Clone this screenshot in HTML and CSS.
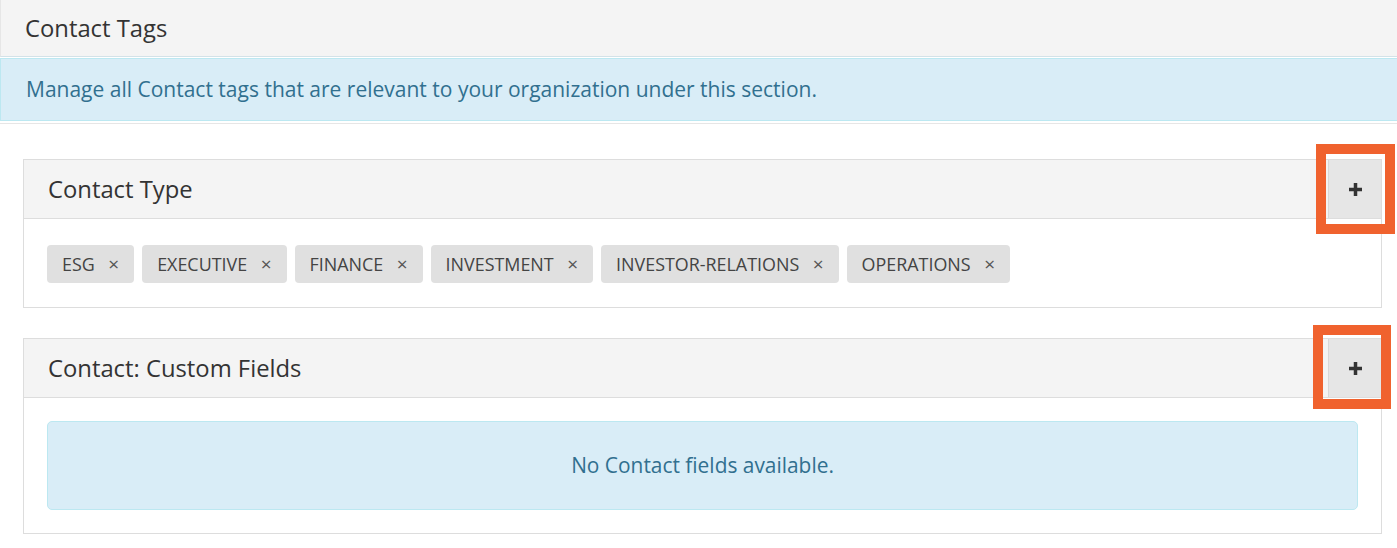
FILE: index.html
```html
<!DOCTYPE html>
<html lang="en">
<head>
    <meta charset="UTF-8">
    <meta name="viewport" content="width=device-width, initial-scale=1.0">
    <title>Contact Tags</title>
    <link rel="stylesheet" href="styles.css">
</head>
<body>
    <div class="page-head">Contact Tags</div>
    <div class="info-bar">Manage all Contact tags that are relevant to your organization under this section.</div>

    <div class="content">
        <!-- Contact Type -->
        <div class="panel">
            <div class="panel-heading">
                <span class="panel-title">Contact Type</span>
                <button class="add-btn" type="button">
                    <svg width="15" height="15" viewBox="0 0 15 15"><path d="M7.5 1v13M1 7.5h13" stroke="#333" stroke-width="3.5"/></svg>
                </button>
                <span class="highlight highlight-one"></span>
            </div>
            <div class="panel-body tag-list">
                <span class="tag">ESG <span class="tag-x">&times;</span></span>
                <span class="tag">EXECUTIVE <span class="tag-x">&times;</span></span>
                <span class="tag">FINANCE <span class="tag-x">&times;</span></span>
                <span class="tag">INVESTMENT <span class="tag-x">&times;</span></span>
                <span class="tag">INVESTOR-RELATIONS <span class="tag-x">&times;</span></span>
                <span class="tag">OPERATIONS <span class="tag-x">&times;</span></span>
            </div>
        </div>

        <!-- Custom fields -->
        <div class="panel">
            <div class="panel-heading">
                <span class="panel-title">Contact: Custom Fields</span>
                <button class="add-btn" type="button">
                    <svg width="15" height="15" viewBox="0 0 15 15"><path d="M7.5 1v13M1 7.5h13" stroke="#333" stroke-width="3.5"/></svg>
                </button>
                <span class="highlight highlight-two"></span>
            </div>
            <div class="panel-body">
                <div class="empty-box">No Contact fields available.</div>
            </div>
        </div>
    </div>
</body>
</html>
```

FILE: styles.css
```css
/* Global */
body {
    font-family: 'Open Sans', 'Noto Sans', sans-serif;
    margin: 0;
    padding: 0;
    background: #fff;
    color: #333;
}

.page-head {
    height: 56px;
    line-height: 57px;
    padding-left: 24px;
    font-size: 23.8px;
    background: #f4f4f4;
    border-left: 1px solid #e6e6e6;
    border-bottom: 1px solid #d3e2e8;
}

.info-bar {
    height: 61px;
    line-height: 60px;
    padding-left: 25px;
    font-size: 21px;
    color: #31708f;
    background: #d9edf7;
    border: 1px solid #bce8f1;
    border-right: none;
    margin-top: 1px;
    box-shadow: 0 2px 0 #fff, 0 3px 0 #e6e6e6;
}

.content {
    padding: 38px 15px 0 23px;
}

.panel {
    border: 1px solid #ddd;
    margin-bottom: 30px;
}

.panel-heading {
    position: relative;
    display: flex;
    align-items: stretch;
    height: 58px;
    background: #f4f4f4;
    border-bottom: 1px solid #ddd;
}

.panel-title {
    flex: 1;
    line-height: 58px;
    padding-left: 24px;
    font-size: 23.8px;
}

.add-btn {
    width: 53px;
    border: none;
    border-left: 1px solid #d8d8d8;
    background: #e6e6e6;
    display: flex;
    align-items: center;
    justify-content: center;
    padding: 0;
}

/* orange annotation frames */
.highlight {
    position: absolute;
    border: 10px solid #f0622e;
}

.highlight-one {
    top: -16px;
    right: -14px;
    width: 59px;
    height: 70px;
}

.highlight-two {
    top: -14px;
    right: -10px;
    width: 58px;
    height: 64px;
}

.panel-body {
    padding: 23px;
}

.tag-list {
    display: flex;
    flex-wrap: wrap;
    gap: 8px;
    padding: 26px 23px 24px;
}

.tag {
    display: inline-flex;
    align-items: center;
    height: 38px;
    padding: 0 15px;
    background: #e0e0e0;
    border-radius: 4px;
    font-size: 17.9px;
    color: #444;
}

.tag-x {
    margin-left: 13.5px;
    font-size: 19px;
    color: #555;
}

.empty-box {
    height: 87px;
    line-height: 87px;
    text-align: center;
    font-size: 20.9px;
    color: #31708f;
    background: #d9edf7;
    border: 1px solid #bce8f1;
    border-radius: 5px;
}
```
